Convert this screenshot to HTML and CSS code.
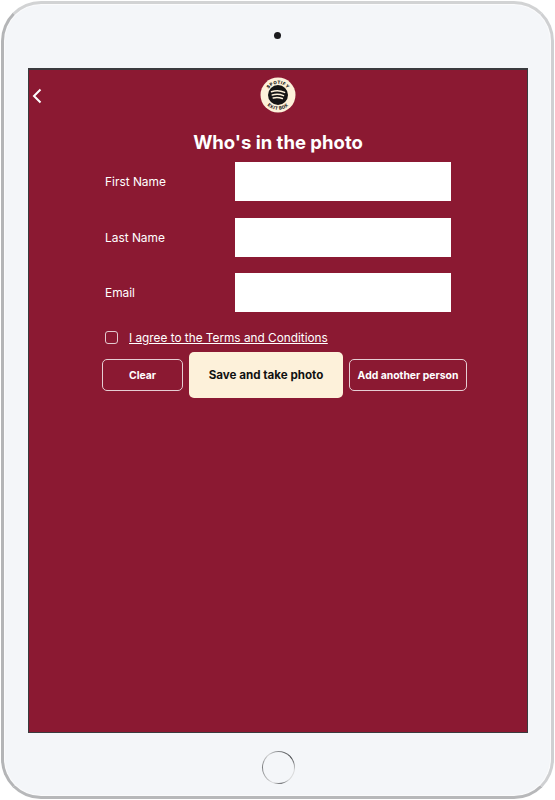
FILE: index.html
```html
<!DOCTYPE html>
<html>
<head>
<meta name="viewport" content="width=device-width, initial-scale=1">
<link rel="stylesheet" href="styles.css">
</head>
<body>
<div class="device">
  <div class="bezel-top"><span class="camera"></span></div>
  <div class="screen">
    <div class="topbar">
      <svg class="back" width="10" height="16" viewBox="0 0 10 16"><path d="M8.5 1.5 L2 8 L8.5 14.5" fill="none" stroke="#fff" stroke-width="2"/></svg>
      <svg class="logo" width="36" height="36" viewBox="0 0 36 36">
        <defs>
          <path id="arcTop" d="M6.8 18 A11.2 11.2 0 0 1 29.2 18"/>
          <path id="arcBottom" d="M3.2 18 A14.8 14.8 0 0 0 32.8 18"/>
        </defs>
        <circle cx="18" cy="18" r="17.5" fill="#fdf1da"/>
        <circle cx="18" cy="18" r="10" fill="#141414"/>
        <path d="M11.5 14.8 C15.5 13.4 20.5 13.6 24.6 15.4 M12.3 18 C15.8 17 20 17.2 23.6 18.6 M13.2 20.9 C16.2 20.2 19.6 20.4 22.4 21.5" fill="none" stroke="#fdf1da" stroke-width="1.5" stroke-linecap="round"/>
        <text class="logo-text"><textPath href="#arcTop" startOffset="50%" text-anchor="middle">SPOTIFY</textPath></text>
        <text class="logo-text"><textPath href="#arcBottom" startOffset="50%" text-anchor="middle">EXIT BOX</textPath></text>
      </svg>
    </div>
    <h1>Who's in the photo</h1>
    <form class="form">
      <div class="row"><label>First Name</label><input type="text"></div>
      <div class="row"><label>Last Name</label><input type="text"></div>
      <div class="row"><label>Email</label><input type="text"></div>
      <div class="terms"><span class="check"></span><a href="#">I agree to the Terms and Conditions</a></div>
      <div class="buttons">
        <button type="button" class="btn btn-clear">Clear</button>
        <button type="button" class="btn btn-save">Save and take photo</button>
        <button type="button" class="btn btn-add">Add another person</button>
      </div>
    </form>
  </div>
  <div class="bezel-bottom"><span class="home"></span></div>
</div>
</body>
</html>
```

FILE: styles.css
```css
* {
  box-sizing: border-box;
}

body {
  margin: 0;
  background: #fff;
  font-family: Inter, "Liberation Sans", sans-serif;
}

/* The tablet */
.device {
  width: 553px;
  height: 798px;
  margin: 1px 0 0 1px;
  padding-left: 24px;
  background: #f4f6f9;
  border: 3px solid #cfd0d2;
  border-top-color: #d2d3d4;
  border-left-color: #b4b5b7;
  border-bottom-color: #b7b8ba;
  border-radius: 40px;
  box-shadow: inset 0 0 0 1px #fbfbfc;
  overflow: hidden;
}

.bezel-top {
  width: 500px;
  height: 64px;
  display: flex;
  justify-content: center;
  padding-top: 28px;
  padding-right: 2px;
}

.camera {
  width: 7px;
  height: 7px;
  border-radius: 50%;
  background: #1b1b1e;
}

.bezel-bottom {
  width: 500px;
  display: flex;
  justify-content: center;
  padding-top: 18px;
}

.home {
  width: 33px;
  height: 33px;
  border-radius: 50%;
  padding: 1px;
  background: conic-gradient(#8b8d90, #3f4144 50deg, #d8d9da 100deg, #d8d9da 140deg, #5b5d60 170deg, #dcdcdd 200deg, #7d7f82 270deg, #d0d1d2 320deg, #8b8d90);
}

.home::before {
  content: "";
  display: block;
  width: 100%;
  height: 100%;
  border-radius: 50%;
  background: #f4f6f9;
}

/* The app */
.screen {
  width: 500px;
  height: 665px;
  background: #8b1932;
  border: 1px solid #3a3a3e;
  border-top-width: 2px;
}

.topbar {
  height: 44px;
  position: relative;
  display: flex;
  justify-content: center;
  padding-top: 7px;
}

.back {
  position: absolute;
  left: 3px;
  top: 18px;
}

.logo-text {
  font-size: 4.4px;
  font-weight: 800;
  letter-spacing: 0.4px;
  fill: #141414;
}

h1 {
  margin: 16px 0 8px;
  font-size: 18.5px;
  line-height: 24px;
  font-weight: 700;
  color: #fff;
  text-align: center;
}

.form {
  display: flex;
  flex-direction: column;
  padding-left: 73px;
}

.row {
  display: flex;
  align-items: center;
  height: 39px;
  margin-bottom: 16.6px;
  padding-left: 3px;
}

.row label {
  width: 130px;
  font-size: 11.9px;
  color: #fff;
}

.row input {
  width: 216px;
  height: 39px;
  border: 0;
  background: #fff;
  border-radius: 0;
}

.terms {
  display: flex;
  align-items: center;
  gap: 11px;
  margin-top: 1px;
  margin-bottom: 6px;
  padding-left: 3px;
  height: 16px;
}

.check {
  width: 13px;
  height: 13px;
  border: 1px solid #e3c9cf;
  border-radius: 3px;
}

.terms a {
  font-size: 11.8px;
  color: #fff;
}

.buttons {
  display: flex;
  align-items: center;
  gap: 6px;
}

.btn {
  font-family: inherit;
  font-weight: 700;
  border-radius: 5px;
  padding: 1px 0 0;
}

.btn-clear,
.btn-add {
  height: 32px;
  font-size: 10.4px;
  color: #fff;
  background: transparent;
  border: 1px solid #e6ced3;
}

.btn-clear {
  width: 81px;
}

.btn-add {
  width: 118px;
}

.btn-save {
  width: 154px;
  height: 46px;
  font-size: 11.6px;
  color: #111;
  background: #fdf1da;
  border: 0;
}
```
